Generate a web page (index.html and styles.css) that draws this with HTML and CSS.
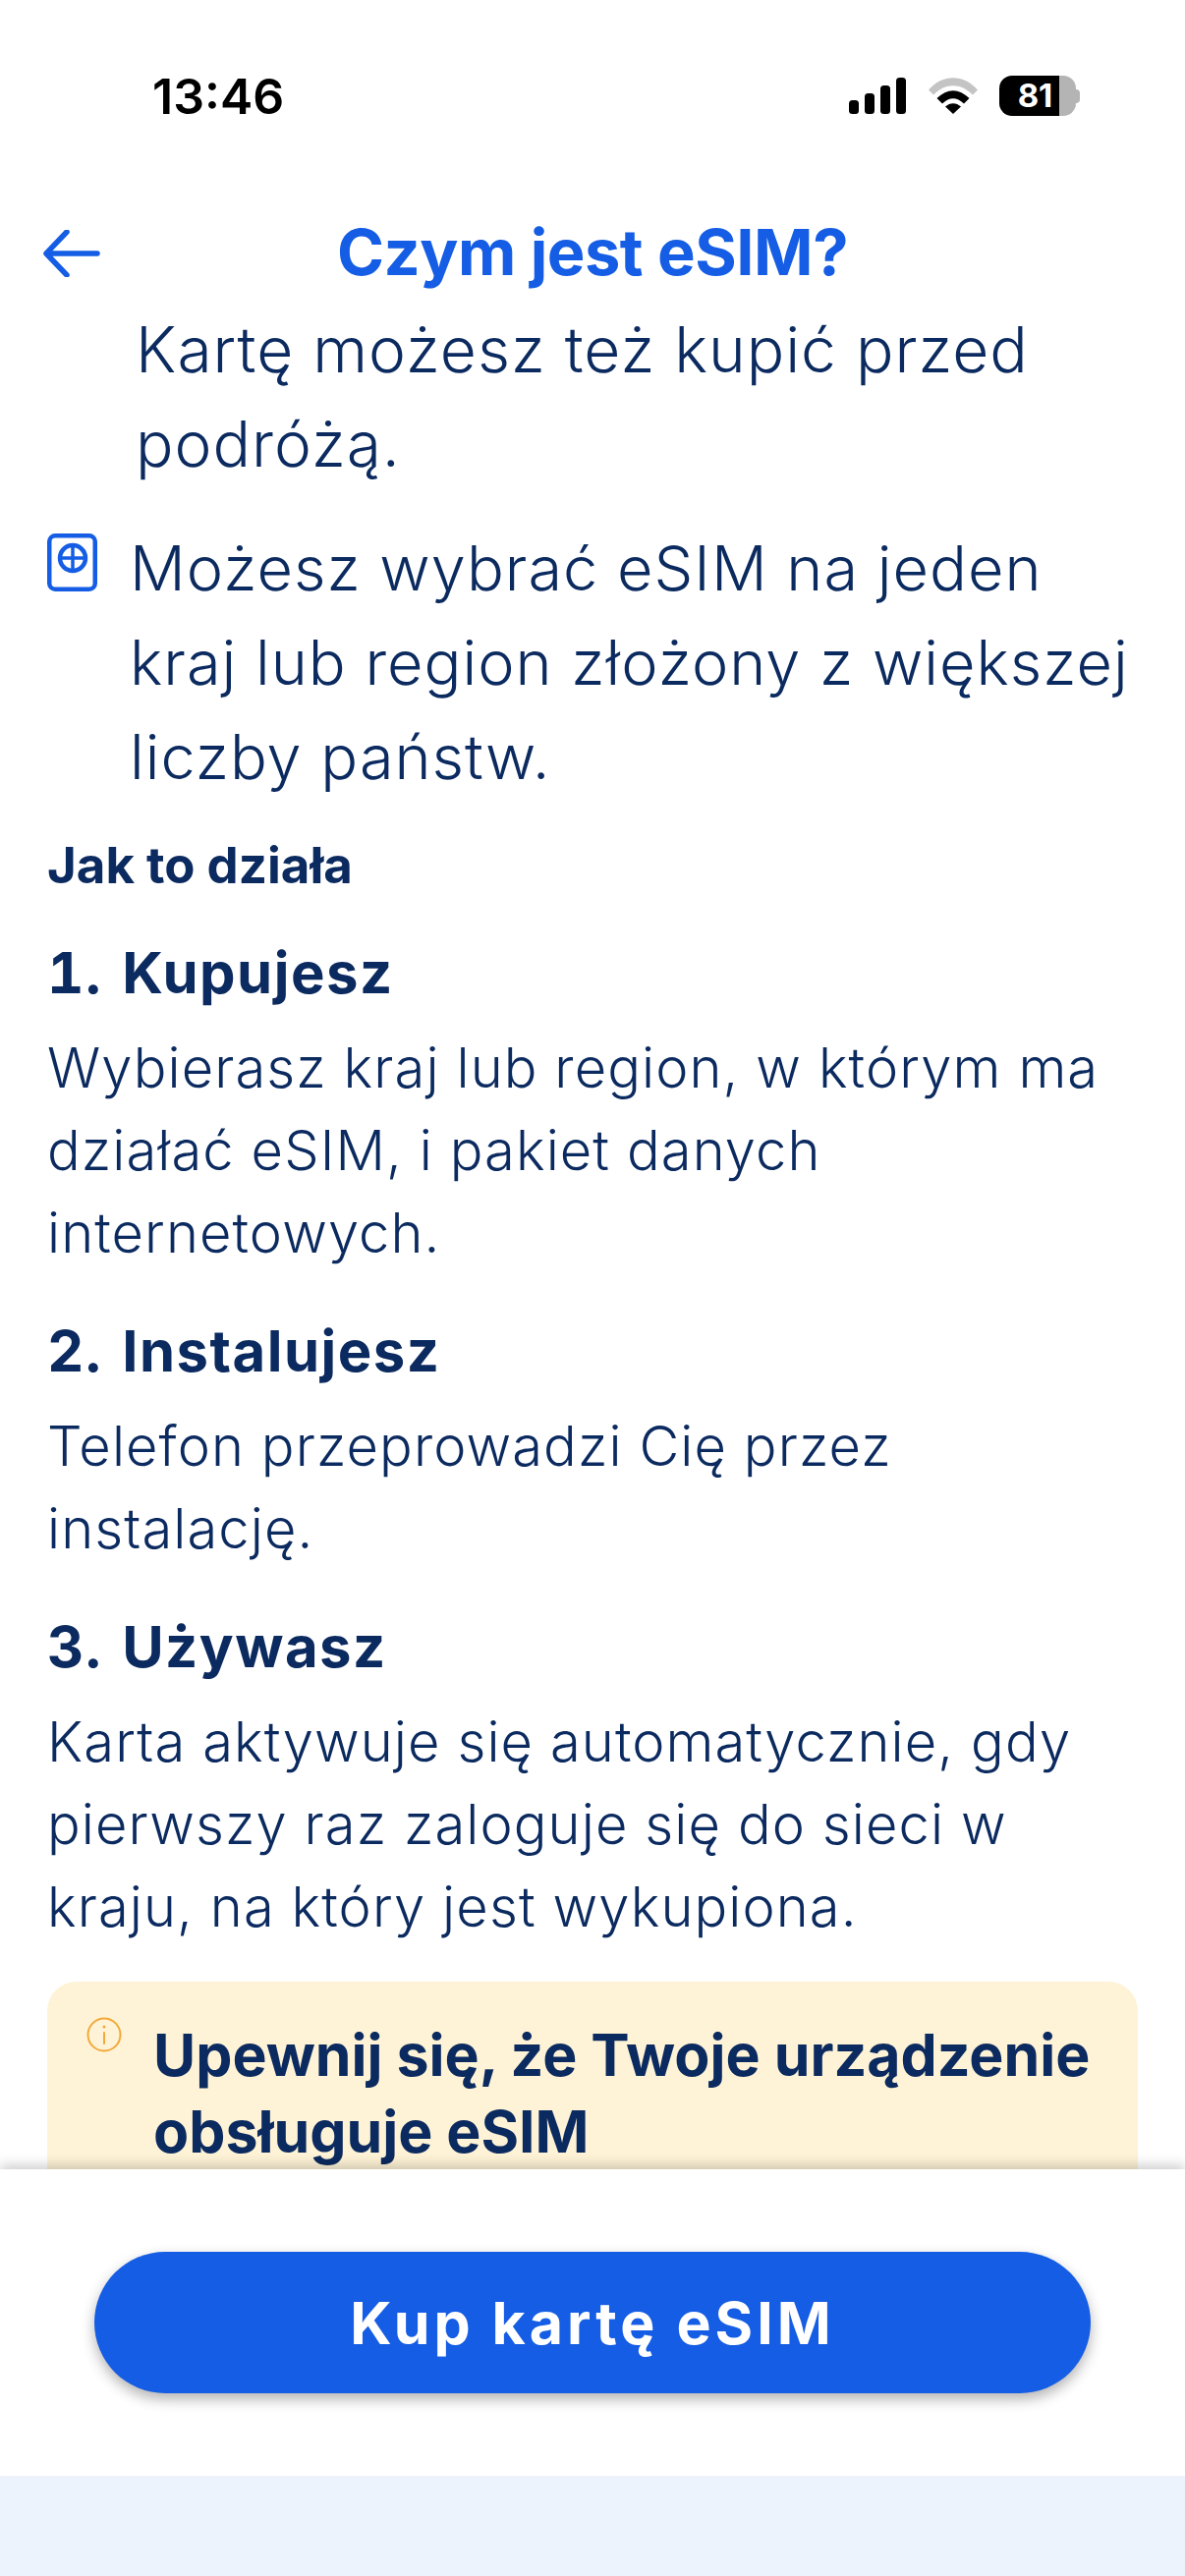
FILE: index.html
```html
<!DOCTYPE html>
<html lang="pl">
<head>
<meta charset="utf-8">
<title>Czym jest eSIM?</title>
<link rel="stylesheet" href="styles.css">
</head>
<body>
<div class="screen">
  <div class="status">
    <span class="time">13:46</span>
    <div class="status-icons">
      <svg class="signal" width="58" height="37" viewBox="0 0 58 37"><rect x="0" y="23" width="10" height="14" rx="3.5"/><rect x="16" y="16" width="10" height="21" rx="3.5"/><rect x="32" y="8" width="10" height="29" rx="3.5"/><rect x="48" y="0" width="10" height="37" rx="3.5"/></svg>
      <svg class="wifi" width="50" height="37" viewBox="0 0 50 37"><path d="M0 12.5C14-4 36-4 50 12.5l-5 5C33 5 17 5 5 17.5z" fill="#c4c4c4"/><path d="M8.500 21C19 10.500 31 10.500 41.500 21l-5.500 5.500C28.500 19.500 21.500 19.500 14 26.500z"/><path d="M17 29.500c5-4.500 11-4.500 16 0L25 37z"/></svg>
      <div class="battery"><span class="battery-level">81</span><span class="battery-rest"></span><span class="battery-cap"></span></div>
    </div>
  </div>
  <header class="topbar">
    <svg class="back" width="58" height="48" viewBox="0 0 58 48"><path d="M55 24H4M24 2 3 24l21 22" fill="none" stroke="#155de4" stroke-width="5.500" stroke-linecap="round" stroke-linejoin="round"/></svg>
    <h1 class="title">Czym jest eSIM?</h1>
  </header>
  <main class="content">
    <p class="lead lead-indent">Kartę możesz też kupić przed podróżą.</p>
    <div class="feature">
      <svg class="feature-icon" width="51" height="59" viewBox="0 0 51 59"><rect x="2.250" y="2.250" width="46.500" height="54.500" rx="6" fill="none" stroke="#155de4" stroke-width="4.500"/><circle cx="26" cy="25" r="13" fill="none" stroke="#155de4" stroke-width="4.500"/><path d="M26 12v26M13 25h26" fill="none" stroke="#155de4" stroke-width="3.500"/></svg>
      <p class="lead">Możesz wybrać eSIM na jeden kraj lub region złożony z większej liczby państw.</p>
    </div>
    <h2 class="section-title">Jak to działa</h2>
    <h3 class="step-title">1. Kupujesz</h3>
    <p class="step-text">Wybierasz kraj lub region, w którym ma działać eSIM, i pakiet danych internetowych.</p>
    <h3 class="step-title">2. Instalujesz</h3>
    <p class="step-text">Telefon przeprowadzi Cię przez instalację.</p>
    <h3 class="step-title">3. Używasz</h3>
    <p class="step-text">Karta aktywuje się automatycznie, gdy pierwszy raz zaloguje się do sieci w kraju, na który jest wykupiona.</p>
    <section class="notice">
      <svg class="notice-icon" width="36" height="36" viewBox="0 0 36 36"><circle cx="18" cy="18" r="16.500" fill="none" stroke="#f2a93b" stroke-width="2"/><path d="M18 16v11" stroke="#f2a93b" stroke-width="2" stroke-linecap="round"/><circle cx="18" cy="10" r="1.500" fill="#f2a93b"/></svg>
      <p class="notice-text">Upewnij się, że Twoje urządzenie obsługuje eSIM</p>
    </section>
  </main>
  <footer class="footer">
    <button class="cta">Kup kartę eSIM</button>
  </footer>
  <div class="bottom-band"></div>
</div>
</body>
</html>
```
FILE: styles.css
```css
* { box-sizing: border-box; }
html, body { margin: 0; padding: 0; background: #fff; }
.screen {
  width: 1206px;
  height: 2622px;
  display: flex;
  flex-direction: column;
  overflow: hidden;
  font-family: Inter, "Liberation Sans", sans-serif;
  color: #0b2a5f;
}
.status {
  height: 190px;
  flex: none;
  display: flex;
  justify-content: space-between;
  padding: 68px 107px 0 155px;
}
.time { font-size: 50px; line-height: 60px; font-weight: 600; color: #000; }
.status-icons { display: flex; align-items: flex-start; padding-top: 11px; }
.signal { margin-right: 23px; }
.wifi { margin-right: 22px; }
.battery { display: flex; height: 41px; margin-top: -2px; }
.battery-level {
  width: 61px;
  padding-left: 12px;
  background: #000;
  color: #fff;
  border-radius: 13px 0 0 13px;
  font-size: 33px;
  line-height: 41px;
  font-weight: 700;
  text-align: center;
}
.battery-rest { width: 17px; background: #b4b4b4; border-radius: 0 13px 13px 0; }
.battery-cap { width: 4px; height: 14px; margin-top: 14px; background: #b4b4b4; border-radius: 0 4px 4px 0; }
.topbar {
  flex: none;
  height: 118px;
  position: relative;
  display: flex;
  align-items: center;
  justify-content: center;
  padding-top: 14px;
}
.back { position: absolute; left: 44px; top: 44px; }
.title { margin: 0; font-size: 65px; font-weight: 700; color: #155de4; letter-spacing: -0.5px; }
.content { flex: 1; min-height: 0; overflow: hidden; padding: 0 48px; }
.lead { margin: 0; font-size: 63px; line-height: 96px; font-weight: 300; letter-spacing: 1px; }
.lead-indent { padding-left: 90px; font-size: 64px; }
.feature { display: flex; align-items: flex-start; gap: 33px; margin-top: 30px; }
.feature-icon { flex: none; margin-top: 13px; }
.section-title { margin: 33px 0 0; font-size: 51px; line-height: 60px; font-weight: 700; }
.step-title { margin: 43px 0 0; font-size: 58px; line-height: 70px; font-weight: 700; letter-spacing: 1.500px; word-spacing: 3px; font-variant-numeric: tabular-nums; }
.section-title + .step-title { margin-top: 44px; }
.step-text { margin: 20px 0 0; font-size: 56px; line-height: 84px; font-weight: 300; letter-spacing: 1.100px; }
.notice {
  margin-top: 34px;
  padding: 36px 48px 60px 40px;
  background: #fef3d6;
  border-radius: 30px;
  display: flex;
  gap: 32px;
  align-items: flex-start;
}
.notice-icon { flex: none; }
.notice-text { margin: 0; font-size: 59px; line-height: 78px; font-weight: 700; }
.footer {
  flex: none;
  height: 312px;
  padding-top: 84px;
  background: #fff;
  position: relative;
  box-shadow: 0 -4px 12px rgba(0,0,0,.2);
  display: flex;
  justify-content: center;
  align-items: flex-start;
}
.cta {
  width: 1014px;
  height: 144px;
  border: 0;
  border-radius: 72px;
  background: #155de4;
  color: #fff;
  font-family: inherit;
  font-size: 59px;
  font-weight: 700;
  letter-spacing: 4px;
  box-shadow: 0 6px 14px rgba(0,0,0,.3);
}
.bottom-band { flex: none; height: 102px; background: #edf3fc; position: relative; }
```
